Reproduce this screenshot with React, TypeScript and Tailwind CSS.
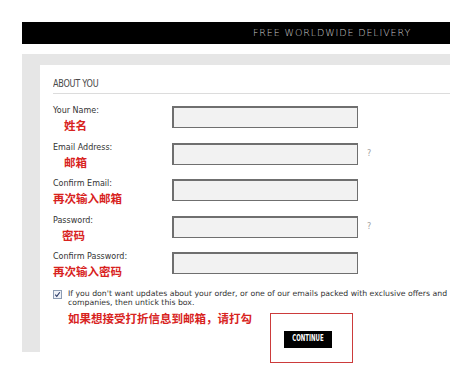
import React from "react";

const rows: { label: string; cn: string; indent: string; help?: boolean }[] = [
  { label: "Your Name:", cn: "姓名", indent: "pl-[11px]" },
  { label: "Email Address:", cn: "邮箱", indent: "pl-[11px]", help: true },
  { label: "Confirm Email:", cn: "再次输入邮箱", indent: "pl-0" },
  { label: "Password:", cn: "密码", indent: "pl-[9px]", help: true },
  { label: "Confirm Password:", cn: "再次输入密码", indent: "pl-0" },
];

export default function App() {
  return (
    <div className="relative w-[450px] h-[376px] overflow-hidden bg-white font-['DejaVu_Sans',sans-serif]">
      <div className="h-[22px]" />
      <div className="ml-[22px] flex h-[22px] items-center bg-black pl-[231px]">
        <span className="font-['DejaVu_Sans',sans-serif] text-[9.5px] font-extralight tracking-[0.9px] text-[#cfcfcf] whitespace-nowrap">
          FREE WORLDWIDE DELIVERY
        </span>
      </div>
      <div className="h-[10px]" />
      <div className="ml-[22px] bg-[#e6e6e6] pl-[18px] pt-[11px]">
        <div className="bg-white pl-[13px] pt-[12px] pb-[4px]">
          <div className="border-b border-[#dcdcdc] pb-[3px]">
            <span className="block h-[13px] font-['DejaVu_Sans_Condensed',sans-serif] text-[11px] leading-[13px] text-[#4a4a4a] tracking-[-0.3px] origin-left scale-x-[0.82]">
              ABOUT YOU
            </span>
          </div>
          <div className="mt-[12px] flex flex-col">
            {rows.map((r) => (
              <div key={r.label} className="flex h-[36.5px] items-start">
                <div className="w-[119px] shrink-0">
                  <div className="h-[10px] text-[8px] leading-[10px] text-[#333] whitespace-nowrap">{r.label}</div>
                  <div
                    className={`mt-[2px] h-[14px] ${r.indent} font-['Noto_Sans_CJK_SC',sans-serif] text-[11.5px] font-bold leading-[14px] text-[#d8231e] whitespace-nowrap`}
                  >
                    {r.cn}
                  </div>
                </div>
                <div className="h-[22px] w-[186px] shrink-0 border border-t-2 border-l-2 border-[#6f6f6f] bg-[#f2f2f2]" />
                {r.help && (
                  <span className="ml-[9px] mt-[6px] text-[8px] leading-[10px] text-[#a0a0a0]">?</span>
                )}
              </div>
            ))}
          </div>
          <div className="flex items-start">
            <svg width="9" height="9" viewBox="0 0 9 9" className="mt-[1px] shrink-0">
              <rect x="0.5" y="0.5" width="8" height="8" fill="#eef1f7" stroke="#8c9cb3" />
              <path d="M2.2 4.6 L3.8 6.4 L6.8 2.3" fill="none" stroke="#2a3a66" strokeWidth="1.1" />
            </svg>
            <div className="ml-[6px] text-[7.76px] leading-[9px] text-[#333] whitespace-nowrap">
              <div>If you don't want updates about your order, or one of our emails packed with exclusive offers and</div>
              <div>companies, then untick this box.</div>
            </div>
          </div>
          <div className="mt-[4px] pl-[15px] h-[14px] font-['Noto_Sans_CJK_SC',sans-serif] text-[11.5px] font-bold leading-[14px] text-[#d8231e] whitespace-nowrap">
            如果想接受打折信息到邮箱，请打勾
          </div>
          <div className="mt-[6px] ml-[231px] flex h-[17px] w-[48px] items-center justify-center bg-black">
            <span className="font-['DejaVu_Sans_Condensed',sans-serif] text-[8px] font-bold leading-[10px] text-white origin-center scale-x-[0.75] whitespace-nowrap">
              CONTINUE
            </span>
          </div>
        </div>
      </div>
      <div className="absolute left-[270px] top-[313px] h-[50px] w-[83px] border border-[#cc3b3b]" />
    </div>
  );
}
